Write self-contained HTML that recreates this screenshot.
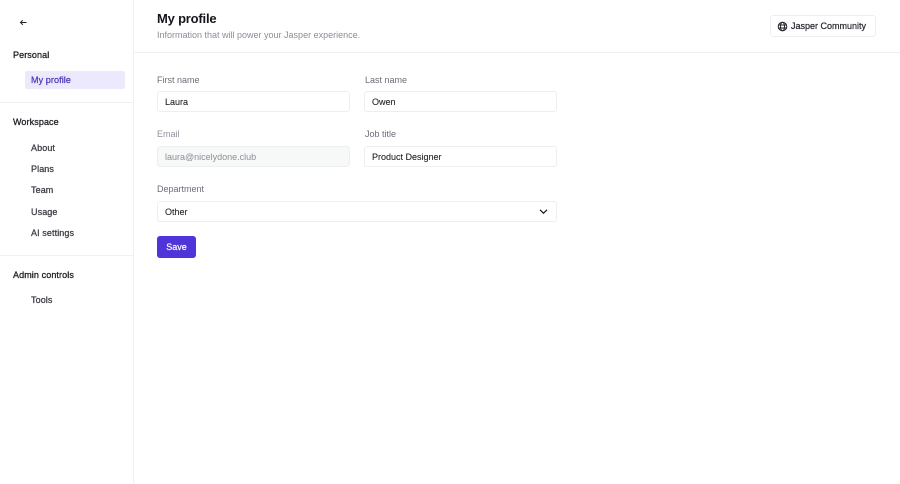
<!DOCTYPE html>
<html>
<head>
<meta charset="utf-8">
<style>
html,body{margin:0;padding:0;width:900px;height:484px;overflow:hidden;background:#fff;font-family:"Liberation Sans",sans-serif}
.a{position:absolute;white-space:nowrap}
.line{position:absolute;background:#eff0f2}
.h{font-size:9px;color:#1f2026;line-height:14px;left:13px;-webkit-text-stroke:.3px #1f2026;letter-spacing:.1px}
.n{font-size:9px;color:#3a3c44;line-height:14px;left:31px;-webkit-text-stroke:.25px #3a3c44;letter-spacing:.1px}
.l{font-size:9px;color:#6b6e7a;line-height:14px}
.i{position:absolute;box-sizing:border-box;height:21px;border:1px solid #eceef0;border-radius:3px;background:#fff;font-size:9px;line-height:20px;padding-left:7px;color:#23242a;-webkit-text-stroke:.1px #23242a}
</style>
</head>
<body>
<div class="line" style="left:133px;top:0;width:1px;height:484px"></div>
<div class="line" style="left:133px;top:52px;width:767px;height:1px"></div>
<div class="line" style="left:0;top:102px;width:133px;height:1px"></div>
<div class="line" style="left:0;top:255px;width:133px;height:1px"></div>

<svg class="a" style="left:18px;top:17px" width="11" height="11" viewBox="0 0 11 11" fill="none" stroke="#22232a" stroke-width="1"><path d="M8.5 5.5H2.5M4.8 3.2L2.5 5.5 4.8 7.8"/></svg>

<div class="a h" style="top:48px">Personal</div>
<div class="a" style="left:25px;top:71px;width:100px;height:18px;background:#ece9fc;border-radius:2px"></div>
<div class="a n" style="top:73px;color:#4f3bb8;-webkit-text-stroke:.25px #4f3bb8">My profile</div>
<div class="a h" style="top:115px">Workspace</div>
<div class="a n" style="top:141px">About</div>
<div class="a n" style="top:162px">Plans</div>
<div class="a n" style="top:183px">Team</div>
<div class="a n" style="top:205px">Usage</div>
<div class="a n" style="top:226px">AI settings</div>
<div class="a h" style="top:268px">Admin controls</div>
<div class="a n" style="top:293px">Tools</div>

<div class="a" style="left:157px;top:10px;font-size:13px;font-weight:700;line-height:18px;color:#15161b;letter-spacing:-.2px">My profile</div>
<div class="a" style="left:157px;top:28px;font-size:9px;line-height:14px;color:#8b8e99">Information that will power your Jasper experience.</div>

<div class="a" style="left:770px;top:15px;width:106px;height:22px;box-sizing:border-box;border:1px solid #eceef0;border-radius:3px"></div>
<svg class="a" style="left:777px;top:21px" width="11" height="11" viewBox="0 0 11 11" fill="none" stroke="#22232a" stroke-width="1"><circle cx="5.5" cy="5.5" r="4.3"/><ellipse cx="5.5" cy="5.5" rx="2" ry="4.3"/><path d="M1.2 4h8.6M1.2 7h8.6"/></svg>
<div class="a" style="left:791px;top:19px;font-size:9px;line-height:14px;color:#2a2b32;-webkit-text-stroke:.25px #2a2b32">Jasper Community</div>

<div class="a l" style="left:157px;top:73px">First name</div>
<div class="i" style="left:157px;top:91px;width:193px">Laura</div>
<div class="a l" style="left:365px;top:73px">Last name</div>
<div class="i" style="left:364px;top:91px;width:193px">Owen</div>

<div class="a l" style="left:157px;top:127px;color:#8f929c">Email</div>
<div class="i" style="left:157px;top:146px;width:193px;background:#f7f8f8;color:#8b8e97;-webkit-text-stroke:0">laura@nicelydone.club</div>
<div class="a l" style="left:365px;top:127px">Job title</div>
<div class="i" style="left:364px;top:146px;width:193px">Product Designer</div>

<div class="a l" style="left:157px;top:182px">Department</div>
<div class="i" style="left:157px;top:201px;width:400px">Other</div>
<svg class="a" style="left:538px;top:206px" width="11" height="11" viewBox="0 0 11 11" fill="none" stroke="#22232a" stroke-width="1.3"><path d="M2 3.8L5.5 7.2 9 3.8"/></svg>

<div class="a" style="left:157px;top:236px;width:39px;height:22px;background:#4f35d9;border-radius:3px;color:#fff;font-size:9px;line-height:22px;text-align:center;-webkit-text-stroke:.2px #fff">Save</div>
</body>
</html>
